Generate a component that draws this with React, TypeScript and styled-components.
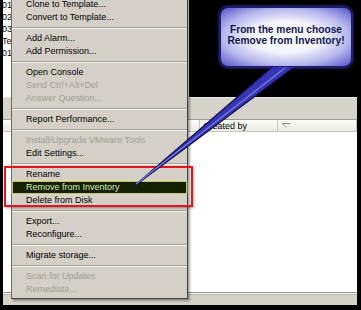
import styled, { createGlobalStyle } from "styled-components";

type MenuEntry =
  | { kind: "item"; label: string; disabled?: boolean; active?: boolean }
  | { kind: "sep" };

const menuEntries: MenuEntry[] = [
  { kind: "item", label: "Clone to Template..." },
  { kind: "item", label: "Convert to Template..." },
  { kind: "sep" },
  { kind: "item", label: "Add Alarm..." },
  { kind: "item", label: "Add Permission..." },
  { kind: "sep" },
  { kind: "item", label: "Open Console" },
  { kind: "item", label: "Send Ctrl+Alt+Del", disabled: true },
  { kind: "item", label: "Answer Question...", disabled: true },
  { kind: "sep" },
  { kind: "item", label: "Report Performance..." },
  { kind: "sep" },
  { kind: "item", label: "Install/Upgrade VMware Tools", disabled: true },
  { kind: "item", label: "Edit Settings..." },
  { kind: "sep" },
  { kind: "item", label: "Rename" },
  { kind: "item", label: "Remove from Inventory", active: true },
  { kind: "item", label: "Delete from Disk" },
  { kind: "sep" },
  { kind: "item", label: "Export..." },
  { kind: "item", label: "Reconfigure..." },
  { kind: "sep" },
  { kind: "item", label: "Migrate storage..." },
  { kind: "sep" },
  { kind: "item", label: "Scan for Updates", disabled: true },
  { kind: "item", label: "Remediate...", disabled: true },
];

const treeLabels = ["01", "02", "03", "Ter", "01"];

const App = () => {
  return (
    <>
      <GlobalStyle />
      <Screen>
        <TopRow>
          <TreeList>
            {treeLabels.map((label, i) => (
              <TreeLabel key={i}>{label}</TreeLabel>
            ))}
          </TreeList>
          <Console />
        </TopRow>
        <TasksPane>
          <Toolbar />
          <HeaderRow>
            <HeaderCell />
            <HeaderCell>Created by</HeaderCell>
            <HeaderCell>
              <svg width="9" height="5" viewBox="0 0 9 5">
                <line x1="0.5" y1="0.5" x2="8.5" y2="0.5" stroke="#8c8a84" />
                <line x1="0.5" y1="0.5" x2="4.5" y2="4.5" stroke="#9a978f" />
                <line x1="8.5" y1="0.5" x2="4.5" y2="4.5" stroke="#dedcd6" />
              </svg>
            </HeaderCell>
          </HeaderRow>
          <TableBody />
          <StatusBar />
        </TasksPane>

        <Menu>
          {menuEntries.map((entry, i) =>
            entry.kind === "sep" ? (
              <Separator key={i} />
            ) : (
              <MenuItem key={i} $disabled={entry.disabled} $active={entry.active}>
                {entry.label}
              </MenuItem>
            )
          )}
        </Menu>

        <RedFrame />

        <Pointer width="361" height="310" viewBox="0 0 361 310">
          <polygon
            points="278,62 301,62 133,187"
            fill="#3636b4"
            stroke="#10104a"
            strokeWidth="1.2"
            strokeLinejoin="round"
          />
          <line x1="290" y1="64" x2="136" y2="184" stroke="#7c7ce2" strokeWidth="1.2" />
        </Pointer>

        <Callout>
          <CalloutText>From the menu choose</CalloutText>
          <CalloutText>Remove from Inventory!</CalloutText>
        </Callout>
      </Screen>
    </>
  );
};

const GlobalStyle = createGlobalStyle`
  html, body {
    margin: 0;
    padding: 0;
    background: #000;
  }
  body {
    font-family: "Liberation Sans", Arial, sans-serif;
  }
`;

const Screen = styled.div`
  position: relative;
  width: 361px;
  height: 310px;
  box-sizing: border-box;
  padding: 0 4px 5px 3px;
  display: grid;
  grid-template-rows: 97px 1fr;
  background: #000;
  overflow: hidden;
`;

const TopRow = styled.div`
  display: grid;
  grid-template-columns: 186px 1fr;
`;

const TreeList = styled.div`
  display: flex;
  flex-direction: column;
  background: #fff;
  margin-top: -1px;
  overflow: hidden;
`;

const TreeLabel = styled.div`
  height: 12px;
  line-height: 12px;
  font-size: 9px;
  color: #000;
  white-space: nowrap;
  text-indent: -1px;
`;

const Console = styled.div`
  background: #000;
`;

const TasksPane = styled.div`
  display: grid;
  grid-template-rows: 23px 12px 1fr 13px;
  background: #fff;
`;

const Toolbar = styled.div`
  background: #d6d3cc;
  border-top: 1px solid #e6e4de;
  border-bottom: 1px solid #9e9b94;
`;

const HeaderRow = styled.div`
  display: grid;
  grid-template-columns: 197px 78px 1fr;
  background: linear-gradient(#fbfbf9, #ebeae4);
  border-bottom: 1px solid #c9c7bd;
`;

const HeaderCell = styled.div`
  display: flex;
  align-items: center;
  padding-left: 3px;
  border-right: 1px solid #c6c4ba;
  font-size: 9px;
  color: #000;
  white-space: nowrap;
  overflow: hidden;

  svg {
    margin-left: 1px;
  }
`;

const TableBody = styled.div`
  background: #fff;
`;

const StatusBar = styled.div`
  background: #d4d1c9;
  border-top: 1px solid #9a978f;
  box-shadow: inset 0 1px 0 #f4f3ef, inset 0 2px 0 #bdbab2;
`;

const Menu = styled.div`
  position: absolute;
  left: 11px;
  top: -5px;
  width: 177px;
  box-sizing: border-box;
  padding: 2px 0;
  display: flex;
  flex-direction: column;
  background: #d4d0c8;
  border: 1px solid;
  border-color: #e8e6e0 #404040 #404040 #6a6a6a;
  box-shadow: 2px 2px 2px rgba(0, 0, 0, 0.35);
`;

const MenuItem = styled.div<{ $disabled?: boolean; $active?: boolean }>`
  height: 13px;
  line-height: 13px;
  padding-left: 14px;
  font-size: 9px;
  white-space: nowrap;
  color: ${(p) => (p.$active ? "#d6ecb8" : p.$disabled ? "#a19e97" : "#000")};
  background: ${(p) => (p.$active ? "#142000" : "transparent")};
  box-shadow: ${(p) =>
    p.$active ? "inset 0 0 0 1px #c2c270, 0 0 2px #e6e69a" : "none"};
`;

const Separator = styled.div`
  height: 8px;
  display: flex;
  align-items: center;

  &::before {
    content: "";
    flex: 1;
    border-top: 1px solid #a3a098;
    border-bottom: 1px solid #f4f3ef;
  }
`;

const RedFrame = styled.div`
  position: absolute;
  left: 4px;
  top: 166px;
  width: 189px;
  height: 41px;
  box-sizing: border-box;
  border: 2px solid #e3161c;
  box-shadow: 1px 1px 2px rgba(0, 0, 0, 0.35);
`;

const Pointer = styled.svg`
  position: absolute;
  left: 0;
  top: 0;
  pointer-events: none;
`;

const Callout = styled.div`
  position: absolute;
  left: 220px;
  top: 7px;
  width: 132px;
  height: 60px;
  box-sizing: border-box;
  display: flex;
  flex-direction: column;
  align-items: center;
  justify-content: center;
  padding-bottom: 4px;
  border: 1px solid #1c1c6e;
  border-radius: 8px;
  background: radial-gradient(
    ellipse at 50% 50%,
    #ffffff 0%,
    #f4f4fe 38%,
    #b8b8ee 68%,
    #5252ca 100%
  );
  box-shadow: 0 0 3px 1px #3434a8;
`;

const CalloutText = styled.div`
  font-size: 10.2px;
  font-weight: bold;
  line-height: 11px;
  color: #16164c;
  white-space: nowrap;
`;

export default App;
